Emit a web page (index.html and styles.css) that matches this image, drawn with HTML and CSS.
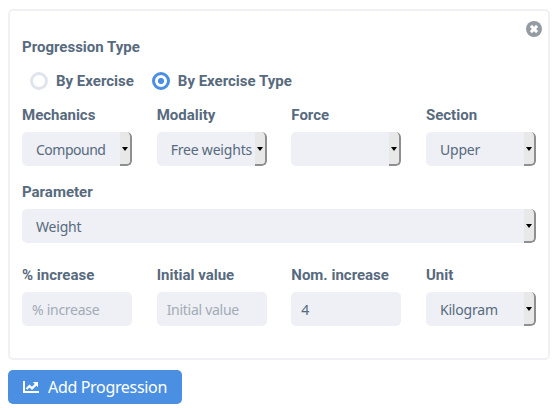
FILE: index.html
```html
<!DOCTYPE html>
<html lang="en">
<head>
<meta charset="utf-8">
<title>Progression</title>
<link rel="stylesheet" href="styles.css">
</head>
<body>
<section class="card">
  <button class="close" type="button" aria-label="Remove">
    <svg viewBox="0 0 16 16" width="16" height="16"><circle cx="8" cy="8" r="8" fill="#959ba3"/><path d="M4.9 4.9l6.2 6.2M11.1 4.9l-6.2 6.2" stroke="#fff" stroke-width="2.9"/></svg>
  </button>
  <div class="label title">Progression Type</div>
  <div class="radios">
    <label class="radio"><span class="dot"></span><span class="label">By Exercise</span></label>
    <label class="radio"><span class="dot on"></span><span class="label">By Exercise Type</span></label>
  </div>
  <div class="grid">
    <div class="field"><div class="label">Mechanics</div><div class="select"><span class="value compound">Compound</span><span class="arrow"></span></div></div>
    <div class="field"><div class="label">Modality</div><div class="select"><span class="value">Free weights</span><span class="arrow"></span></div></div>
    <div class="field"><div class="label">Force</div><div class="select"><span class="value"></span><span class="arrow"></span></div></div>
    <div class="field"><div class="label">Section</div><div class="select"><span class="value">Upper</span><span class="arrow"></span></div></div>
  </div>
  <div class="field wide"><div class="label">Parameter</div><div class="select"><span class="value">Weight</span><span class="arrow"></span></div></div>
  <div class="grid amounts">
    <div class="field"><div class="label">% increase</div><input class="input" placeholder="% increase"></div>
    <div class="field"><div class="label">Initial value</div><input class="input" placeholder="Initial value"></div>
    <div class="field"><div class="label">Nom. increase</div><input class="input" value="4"></div>
    <div class="field"><div class="label">Unit</div><div class="select"><span class="value">Kilogram</span><span class="arrow"></span></div></div>
  </div>
</section>
<button class="add" type="button">
  <svg viewBox="0 0 16 12" width="16" height="12" fill="none"><path d="M1 0v11h15" stroke="#fff" stroke-width="2"/><path d="M3.5 8L6.5 5L9 7.4L13 3.4" stroke="#fff" stroke-width="2.2"/><path d="M9.8 1H15v5.2z" fill="#fff"/></svg>
  <span>Add Progression</span>
</button>
</body>
</html>
```
FILE: styles.css
```css
* { box-sizing: border-box; }
body { margin: 0; padding: 9px 10px 0 8px; background: #fff; color: #576a7e; font-family: "Noto Sans", sans-serif; }
.card { position: relative; height: 351px; padding: 26px 12px 0; border: 2px solid #f0f1f4; border-radius: 5px; }
.close { position: absolute; top: 10px; right: 6px; width: 16px; height: 16px; padding: 0; border: 0; background: none; }
.close svg { display: block; }
.label { font: bold 15px/20px Roboto, sans-serif; letter-spacing: 0; white-space: nowrap; }
.radios { display: flex; gap: 18px; margin: 14px 0 14px 8px; }
.radio { display: flex; align-items: center; gap: 8px; }
.dot { width: 18px; height: 18px; border: 3px solid #e0e4ec; border-radius: 50%; }
.on { border-color: #4a8fe2; background: radial-gradient(circle, #4a8fe2 2.7px, #fff 3.5px); }
.grid { display: grid; grid-template-columns: repeat(4, 110px); justify-content: space-between; }
.field .label { margin-bottom: 7px; }
.wide { margin-top: 16px; }
.amounts { margin-top: 22px; }
.select, .input { display: flex; width: 100%; height: 34px; border: 0; border-radius: 5px; background: #eef0f5; overflow: hidden; }
.value { flex: 1; min-width: 0; padding-left: 14px; font-size: 14px; line-height: 35px; letter-spacing: -0.2px; white-space: nowrap; }
.compound { letter-spacing: -0.5px; }
.input { padding: 1px 10px 0; color: #576a7e; font: 14px "Noto Sans", sans-serif; letter-spacing: -0.28px; }
.input::placeholder { color: #a3abb6; opacity: 1; }
.arrow { display: flex; align-items: center; justify-content: center; width: 12px; border-right: 2px solid #8f8f8f; border-bottom: 2px solid #8f8f8f; border-radius: 0 5px 5px 0; background: #e8e8e8; }
.arrow::before { content: ""; margin-top: 1px; border: 3px solid transparent; border-top: 4px solid #000; border-bottom: 0; }
.add { display: flex; align-items: center; gap: 9px; width: 174px; height: 34px; margin-top: 10px; padding: 0 15px; border: 0; border-radius: 5px; background: #4a8fe2; color: #fff; font: 16px "Noto Sans", sans-serif; letter-spacing: -0.33px; white-space: nowrap; }
.add svg { flex: none; }
```
